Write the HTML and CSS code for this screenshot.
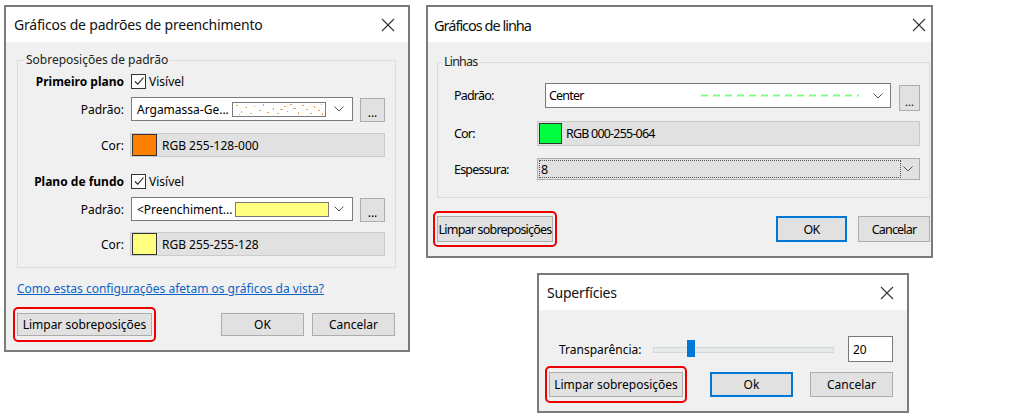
FILE: index.html
```html
<!DOCTYPE html>
<html lang="pt-BR">
<head>
    <meta charset="UTF-8">
    <title>Sobreposições de gráficos</title>
    <link rel="stylesheet" href="styles.css">
</head>
<body>
    <div class="desktop">

        <!-- Gráficos de padrões de preenchimento -->
        <div class="window win-fill">
            <div class="titlebar">
                <span class="title">Gráficos de padrões de preenchimento</span>
                <svg class="close" width="14" height="14" viewBox="0 0 14 14"><path d="M1 1L13 13M13 1L1 13"/></svg>
            </div>
            <div class="win-body">
                <fieldset class="group">
                    <legend>Sobreposições de padrão</legend>

                    <div class="row head first">
                        <span class="label bold">Primeiro plano</span>
                        <span class="check"><span class="box"><svg width="12" height="12" viewBox="0 0 12 12"><path d="M2 6.5L4.8 9.2L10.5 2.5"/></svg></span>Visível</span>
                    </div>
                    <div class="row field">
                        <span class="label">Padrão:</span>
                        <div class="combo">
                            <span class="combo-text">Argamassa-Ge...</span>
                            <svg class="preview" width="94" height="15" viewBox="0 0 94 15">
                                <rect x="0.5" y="0.5" width="93" height="14" fill="#fff" stroke="#7a7a7a"/>
                                <g fill="#f4a045">
                                    <rect x="4" y="3" width="2" height="1"/><rect x="9" y="9" width="1" height="2"/><rect x="13" y="5" width="2" height="1"/>
                                    <rect x="18" y="11" width="2" height="1"/><rect x="22" y="4" width="1" height="1"/><rect x="27" y="8" width="2" height="1"/>
                                    <rect x="31" y="2" width="1" height="2"/><rect x="35" y="10" width="2" height="1"/><rect x="41" y="6" width="1" height="2"/>
                                    <rect x="45" y="11" width="2" height="1"/><rect x="48" y="7" width="3" height="1"/><rect x="52" y="4" width="2" height="1"/>
                                    <rect x="55" y="9" width="1" height="1"/><rect x="58" y="2" width="2" height="1"/><rect x="61" y="6" width="3" height="1"/>
                                    <rect x="66" y="10" width="1" height="2"/><rect x="70" y="3" width="2" height="1"/><rect x="74" y="7" width="2" height="1"/>
                                    <rect x="78" y="11" width="2" height="1"/><rect x="82" y="4" width="1" height="2"/><rect x="86" y="8" width="2" height="1"/>
                                    <rect x="89" y="2" width="1" height="1"/><rect x="90" y="11" width="1" height="2"/><rect x="7" y="12" width="1" height="1"/>
                                </g>
                            </svg>
                            <svg class="chevron" width="10" height="6" viewBox="0 0 10 6"><path d="M0.5 0.5L5 5L9.5 0.5"/></svg>
                        </div>
                        <button class="btn dots">...</button>
                    </div>
                    <div class="row field color-row">
                        <span class="label">Cor:</span>
                        <div class="color-field">
                            <span class="swatch orange"></span>
                            <span>RGB 255-128-000</span>
                        </div>
                    </div>

                    <div class="row head second">
                        <span class="label bold">Plano de fundo</span>
                        <span class="check"><span class="box"><svg width="12" height="12" viewBox="0 0 12 12"><path d="M2 6.5L4.8 9.2L10.5 2.5"/></svg></span>Visível</span>
                    </div>
                    <div class="row field">
                        <span class="label">Padrão:</span>
                        <div class="combo">
                            <span class="combo-text">&lt;Preenchiment...</span>
                            <span class="preview solid-yellow"></span>
                            <svg class="chevron" width="10" height="6" viewBox="0 0 10 6"><path d="M0.5 0.5L5 5L9.5 0.5"/></svg>
                        </div>
                        <button class="btn dots">...</button>
                    </div>
                    <div class="row field color-row">
                        <span class="label">Cor:</span>
                        <div class="color-field">
                            <span class="swatch yellow"></span>
                            <span>RGB 255-255-128</span>
                        </div>
                    </div>
                </fieldset>

                <a class="help-link" href="#">Como estas configurações afetam os gráficos da vista?</a>

                <div class="actions">
                    <span class="highlight"><button class="btn clear">Limpar sobreposições</button></span>
                    <div class="actions-right">
                        <button class="btn ok">OK</button>
                        <button class="btn cancel">Cancelar</button>
                    </div>
                </div>
            </div>
        </div>

        <!-- Gráficos de linha -->
        <div class="window win-line">
            <div class="titlebar">
                <span class="title">Gráficos de linha</span>
                <svg class="close" width="14" height="14" viewBox="0 0 14 14"><path d="M1 1L13 13M13 1L1 13"/></svg>
            </div>
            <div class="win-body">
                <fieldset class="group">
                    <legend>Linhas</legend>
                    <div class="row field r1">
                        <span class="label">Padrão:</span>
                        <div class="combo">
                            <span class="combo-text">Center</span>
                            <svg class="dash" width="158" height="3" viewBox="0 0 158 3"><line x1="0" y1="1.5" x2="158" y2="1.5"/></svg>
                            <svg class="chevron" width="10" height="6" viewBox="0 0 10 6"><path d="M0.5 0.5L5 5L9.5 0.5"/></svg>
                        </div>
                        <button class="btn dots">...</button>
                    </div>
                    <div class="row field r2">
                        <span class="label">Cor:</span>
                        <div class="color-field">
                            <span class="swatch green"></span>
                            <span>RGB 000-255-064</span>
                        </div>
                    </div>
                    <div class="row field r3">
                        <span class="label">Espessura:</span>
                        <div class="select">
                            <span class="select-value">8</span>
                            <svg class="chevron" width="10" height="6" viewBox="0 0 10 6"><path d="M0.5 0.5L5 5L9.5 0.5"/></svg>
                        </div>
                    </div>
                </fieldset>

                <div class="actions">
                    <span class="highlight"><button class="btn clear">Limpar sobreposições</button></span>
                    <div class="actions-right">
                        <button class="btn ok default">OK</button>
                        <button class="btn cancel">Cancelar</button>
                    </div>
                </div>
            </div>
        </div>

        <!-- Superfícies -->
        <div class="window win-surface">
            <div class="titlebar">
                <span class="title">Superfícies</span>
                <svg class="close" width="14" height="14" viewBox="0 0 14 14"><path d="M1 1L13 13M13 1L1 13"/></svg>
            </div>
            <div class="win-body">
                <div class="slider-row">
                    <span class="label">Transparência:</span>
                    <div class="slider">
                        <span class="track"></span>
                        <span class="thumb" style="left: 34px"></span>
                    </div>
                    <span class="num-input">20</span>
                </div>
                <div class="actions">
                    <span class="highlight"><button class="btn clear">Limpar sobreposições</button></span>
                    <div class="actions-right">
                        <button class="btn ok default">Ok</button>
                        <button class="btn cancel">Cancelar</button>
                    </div>
                </div>
            </div>
        </div>

    </div>
</body>
</html>
```

FILE: styles.css
```css
body {
    margin: 0;
    background: #ffffff;
    font-family: "Noto Sans", "Liberation Sans", sans-serif;
    font-size: 12px;
    color: #000;
}

.desktop {
    position: relative;
    width: 1024px;
    height: 420px;
}

/* Windows */
.window {
    position: absolute;
    box-sizing: border-box;
    border: 2px solid #7b7b7b;
    background: #f0f0f0;
    display: flex;
    flex-direction: column;
}

.win-fill {
    left: 4px;
    top: 5px;
    width: 406px;
    height: 347px;
}

.win-line {
    left: 426px;
    top: 5px;
    width: 507px;
    height: 253px;
}

.win-surface {
    left: 537px;
    top: 273px;
    width: 372px;
    height: 140px;
}

.titlebar {
    height: 35px;
    background: #fff;
    display: flex;
    align-items: center;
    justify-content: space-between;
    padding: 0 13px 0 8px;
}

.title {
    font-size: 14px;
    letter-spacing: -0.2px;
    color: #111;
}

.close path {
    stroke: #333;
    stroke-width: 1.1;
    fill: none;
}

.win-body {
    flex: 1;
    display: flex;
    flex-direction: column;
}

/* Group box */
.group {
    margin: 0;
    border: 1px solid #dcdcdc;
    min-width: 0;
}

.group legend {
    line-height: 16px;
    padding: 0 2px;
    margin-left: 6px;
    color: #222;
}

.row {
    display: flex;
    align-items: center;
}

.label {
    flex-shrink: 0;
}

.bold {
    font-weight: bold;
}

.check {
    display: flex;
    align-items: center;
    gap: 3px;
}

.box {
    width: 13px;
    height: 13px;
    border: 1px solid #333;
    background: #fff;
    display: flex;
    align-items: center;
    justify-content: center;
}

.box path {
    stroke: #222;
    stroke-width: 1.1;
    fill: none;
}

.combo {
    flex: 1;
    align-self: stretch;
    box-sizing: border-box;
    background: #fff;
    border: 1px solid #7a7a7a;
    display: flex;
    align-items: center;
    padding: 0 8px 0 5px;
}

.combo-text {
    white-space: nowrap;
}

.chevron {
    margin-left: auto;
}

.chevron path {
    stroke: #555;
    stroke-width: 1;
    fill: none;
}

.color-field {
    flex: 1;
    align-self: stretch;
    box-sizing: border-box;
    background: #e1e1e1;
    border: 1px solid #cccccc;
    display: flex;
    align-items: center;
    gap: 5px;
    padding-left: 1px;
}

.swatch {
    box-sizing: border-box;
    width: 25px;
    height: 22px;
    border: 1px solid #333;
}

.swatch.orange { background: #ff8000; }
.swatch.yellow { background: #ffff80; }
.swatch.green { background: #00ff40; width: 23px; height: 21px; }

/* Buttons */
.btn {
    box-sizing: border-box;
    font-family: inherit;
    font-size: 12px;
    background: #e1e1e1;
    border: 1px solid #adadad;
    color: #000;
    padding: 0;
    margin: 0;
}

.btn.default {
    border-color: #0078d7;
    box-shadow: inset 0 0 0 1px #0078d7;
}

.dots {
    align-self: stretch;
    line-height: 1;
    padding-top: 6px;
}

.actions {
    display: flex;
    align-items: center;
    justify-content: space-between;
}

.actions-right {
    display: flex;
}

.highlight {
    display: flex;
    border: 2px solid #ee0000;
    border-radius: 5px;
    padding: 4px 2px;
    margin: -6px -4px;
}

.help-link {
    color: #0a64c8;
    line-height: 16px;
    align-self: flex-start;
}

/* Fill pattern dialog */
.win-fill .win-body {
    padding: 10px 12px 14px 11px;
}

.win-fill .group {
    padding: 0 10px 11px 0;
}

.win-fill .row .label {
    width: 106px;
    text-align: right;
}

.win-fill .row {
    gap: 7px;
}

.win-fill .head {
    height: 16px;
}

.win-fill .head.first { margin-top: 5px; }
.win-fill .head.second { margin-top: 16px; }

.win-fill .field {
    height: 24px;
    margin-top: 8px;
}

.win-fill .color-row {
    margin-top: 12px;
}

.win-fill .head.second + .field + .color-row {
    margin-top: 11px;
}

.win-fill .color-row .color-field {
    margin-left: -1px;
}

.win-fill .preview {
    margin-left: 3px;
}

.preview.solid-yellow {
    box-sizing: border-box;
    width: 94px;
    height: 15px;
    background: #ffff80;
    border: 1px solid #7a7a7a;
}

.win-fill .dots {
    width: 25px;
    margin: 1px 0 -1px;
}

.win-fill .help-link {
    margin-top: 13px;
}

.win-fill .actions {
    margin-top: 16px;
}

.win-fill .actions .btn {
    height: 23px;
}

.win-fill .clear { width: 135px; }
.win-fill .ok, .win-fill .cancel { width: 83px; }
.win-fill .actions-right { gap: 8px; margin-right: 1px; }

/* Line dialog (its text is narrower in the capture) */
.win-line {
    letter-spacing: -0.8px;
}

.win-line .titlebar {
    padding-right: 5px;
    padding-left: 6px;
}

.win-line .title {
    font-size: 14.5px;
    letter-spacing: -1px;
}

.win-line .win-body {
    padding: 12px 1px 13px 9px;
}

.win-line .group {
    padding: 0 9px 17px 16px;
    font-size: 12.5px;
}

.win-line .group legend {
    margin-left: -12px;
}

.win-line .row .label {
    width: 83px;
}

.win-line .r1 { height: 25px; margin-top: 13px; gap: 8px; }
.win-line .r2 { height: 25px; margin-top: 13px; }
.win-line .r3 { height: 22px; margin-top: 12px; }

.win-line .combo {
    padding-left: 3px;
    padding-right: 7px;
}

.dash {
    margin-left: auto;
    margin-right: 14px;
}

.dash line {
    stroke: #80ff80;
    stroke-width: 2;
    stroke-dasharray: 7 5;
}

.win-line .combo .chevron {
    margin-left: 0;
}

.win-line .dots {
    width: 21px;
    height: 26px;
    margin-top: 2px;
    font-size: 11px;
}

.win-line .color-field {
    border-color: #c8c8c8;
    gap: 4px;
}

.select {
    flex: 1;
    align-self: stretch;
    box-sizing: border-box;
    background: #e1e1e1;
    border: 1px solid #adadad;
    display: flex;
    align-items: center;
    padding: 1px 6px 1px 1px;
}

.select-value {
    flex: 1;
    align-self: stretch;
    border: 1px dotted #555;
    margin-right: 2px;
    display: flex;
    align-items: center;
    padding-left: 1px;
}

.win-line .actions .btn {
    height: 26px;
    font-size: 12.5px;
    letter-spacing: -0.8px;
}

.win-line .clear { width: 116px; }
.win-line .ok { width: 71px; }
.win-line .cancel { width: 72px; }
.win-line .actions-right { gap: 11px; }
.win-line .highlight { margin: -5px -4px; padding: 3px 2px; }

.win-line .actions {
    margin-top: 18px;
}

/* Surfaces dialog */
.win-surface .win-body {
    padding: 26px 14px 14px 10px;
}

.slider-row {
    display: flex;
    align-items: center;
    height: 26px;
}

.slider-row .label {
    width: 94px;
    margin-left: 10px;
}

.slider {
    flex: 1;
    position: relative;
    height: 26px;
    display: flex;
    align-items: center;
}

.track {
    flex: 1;
    height: 4px;
    background: #e7eaea;
    border: 1px solid #d6d6d6;
    margin-top: 1px;
}

.thumb {
    position: absolute;
    top: 4px;
    width: 8px;
    height: 17px;
    background: #0078d7;
}

.num-input {
    box-sizing: border-box;
    width: 45px;
    height: 26px;
    margin-left: 14px;
    background: #fff;
    border: 1px solid #7a7a7a;
    padding: 4px 0 0 4px;
}

.win-surface .actions {
    margin-top: 10px;
}

.win-surface .actions .btn {
    height: 25px;
}

.win-surface .clear { width: 134px; }
.win-surface .ok, .win-surface .cancel { width: 83px; }
.win-surface .actions-right { gap: 17px; }
```
